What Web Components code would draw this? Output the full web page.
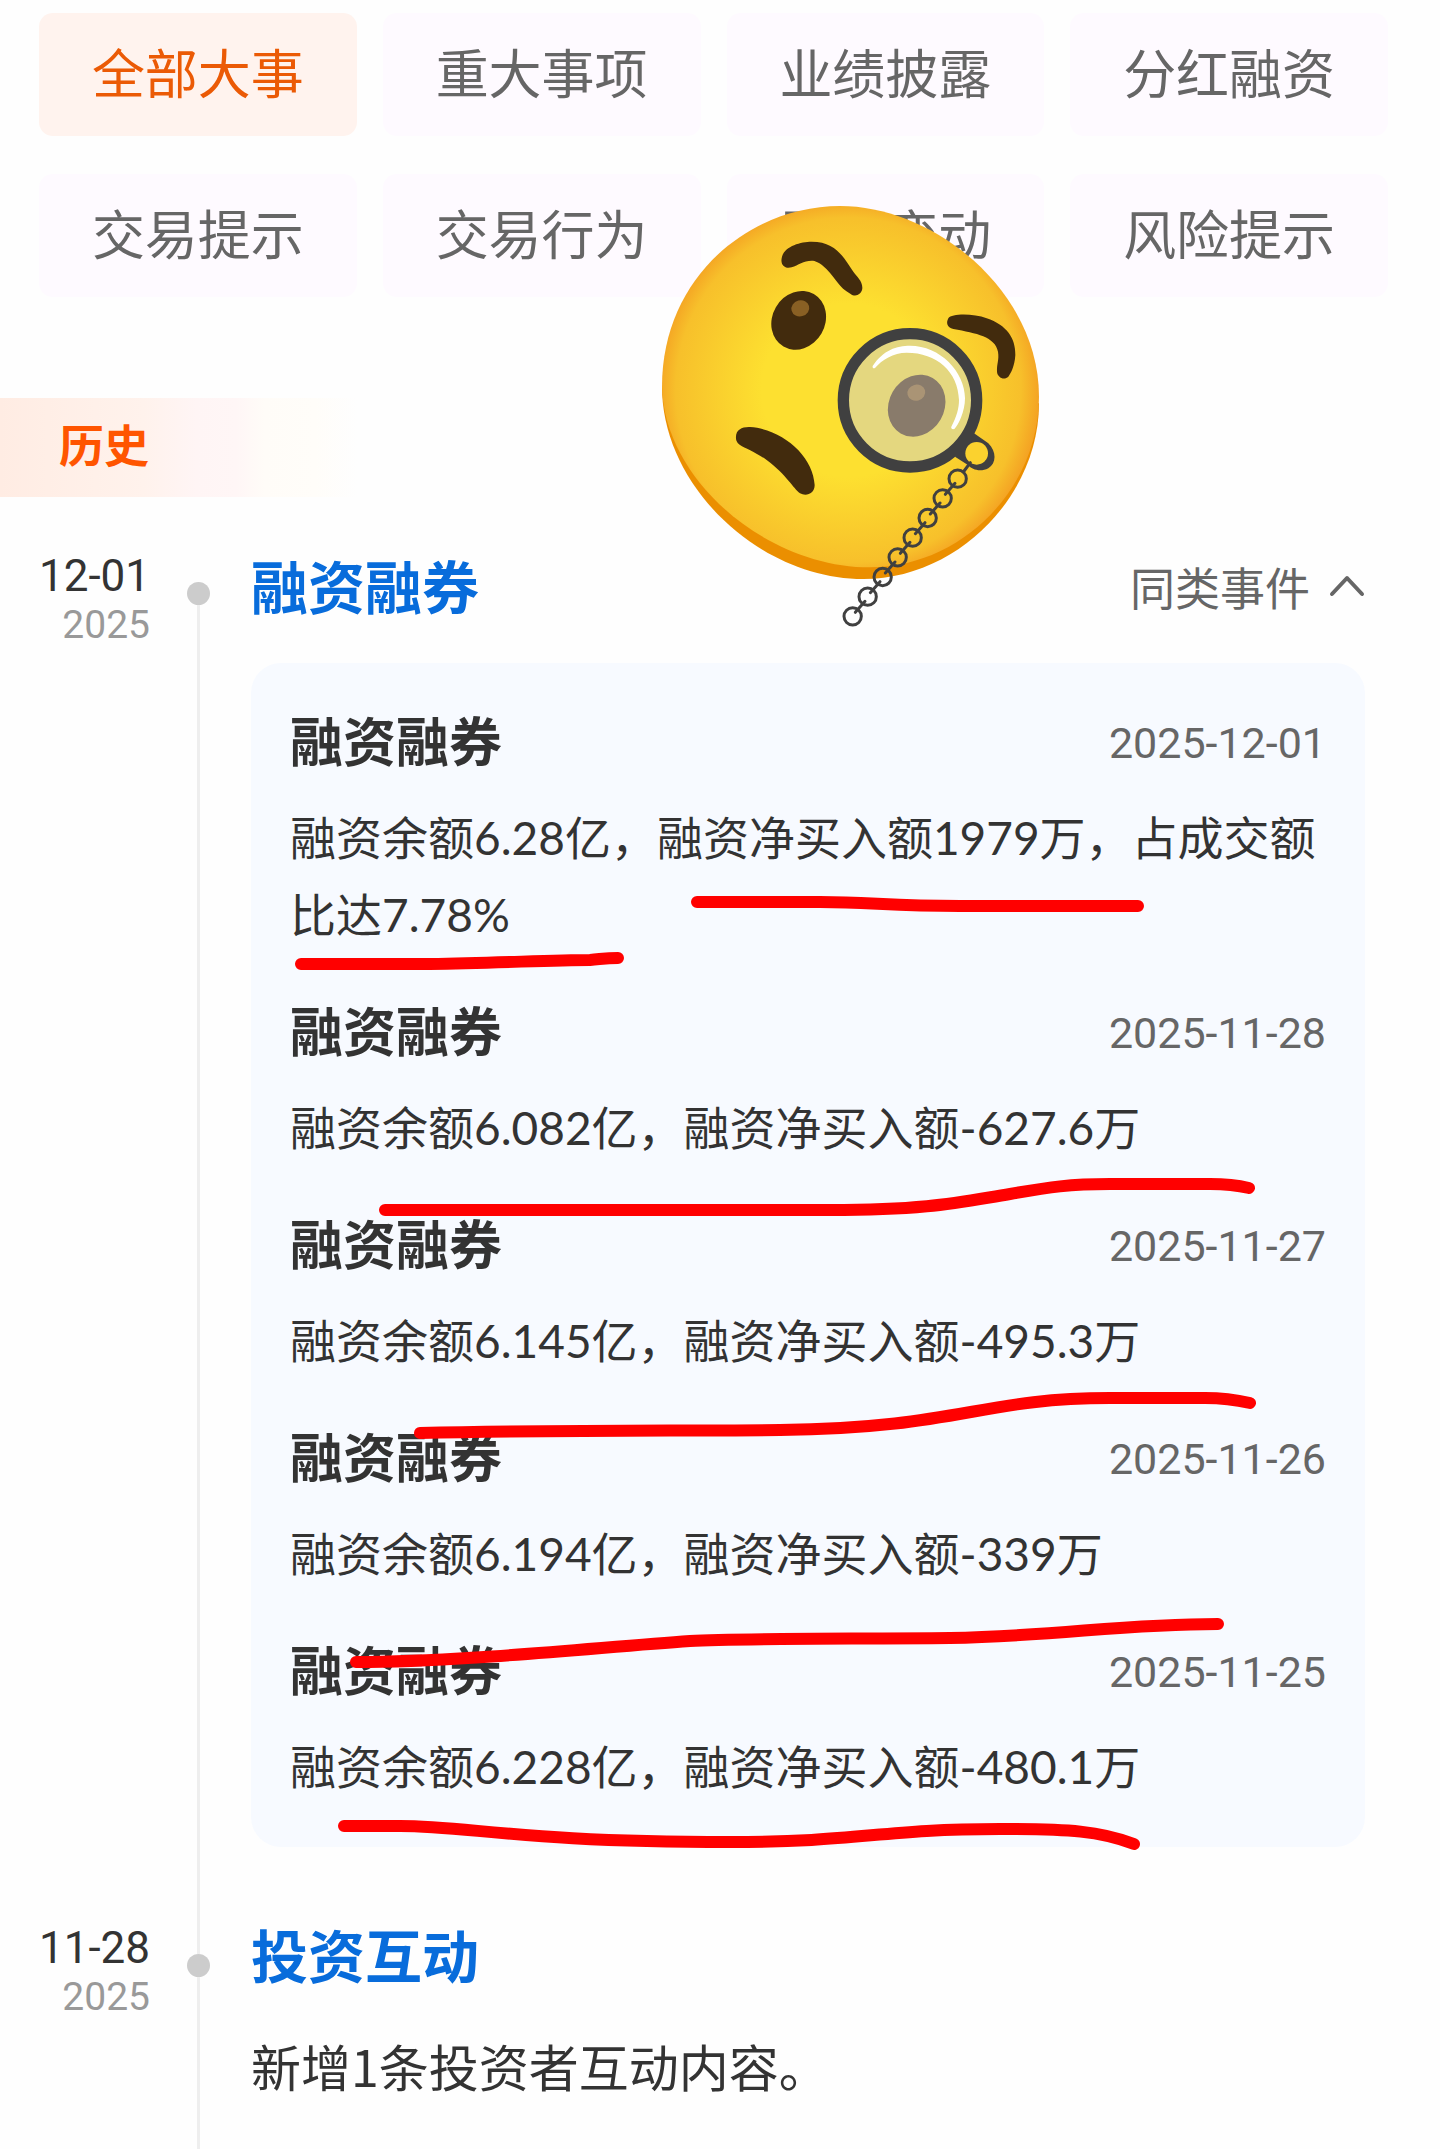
<!DOCTYPE html>
<html lang="zh-CN">
<head>
<meta charset="UTF-8">
<meta name="viewport" content="width=device-width, initial-scale=1">
<title>公司大事</title>
<style>
  body {
    margin: 0;
    background: #fefefe;
    color: #333;
    font-family: "Noto Sans CJK SC", sans-serif;
  }
</style>
</head>
<body>
<event-page>
  <filter-bar>
    <filter-chip active>全部大事</filter-chip>
    <filter-chip>重大事项</filter-chip>
    <filter-chip>业绩披露</filter-chip>
    <filter-chip>分红融资</filter-chip>
    <filter-chip>交易提示</filter-chip>
    <filter-chip>交易行为</filter-chip>
    <filter-chip>股东变动</filter-chip>
    <filter-chip>风险提示</filter-chip>
  </filter-bar>
  <section-banner>历史</section-banner>
  <timeline-event day="12-01" year="2025" heading="融资融券" first>
    <similar-toggle slot="action">同类事件</similar-toggle>
    <record-card>
      <event-record heading="融资融券" date="2025-12-01">融资余额6.28亿，融资净买入额1979万，占成交额比达7.78%</event-record>
      <event-record heading="融资融券" date="2025-11-28">融资余额6.082亿，融资净买入额-627.6万</event-record>
      <event-record heading="融资融券" date="2025-11-27">融资余额6.145亿，融资净买入额-495.3万</event-record>
      <event-record heading="融资融券" date="2025-11-26">融资余额6.194亿，融资净买入额-339万</event-record>
      <event-record heading="融资融券" date="2025-11-25">融资余额6.228亿，融资净买入额-480.1万</event-record>
    </record-card>
  </timeline-event>
  <timeline-event day="11-28" year="2025" heading="投资互动" last>新增1条投资者互动内容。</timeline-event>
  <marker-lines slot="overlay"></marker-lines>
  <monocle-face slot="overlay"></monocle-face>
</event-page>

<script>
class EventPage extends HTMLElement {
  constructor() {
    super();
    this.attachShadow({ mode: 'open' });
    this.shadowRoot.innerHTML = `
      <style>
        :host {
          display: block;
          position: relative;
          overflow: hidden;
        }
        main {
          display: flex;
          flex-direction: column;
        }
      </style>
      <main><slot></slot></main>
      <slot name="overlay"></slot>
    `;
  }
}

class FilterBar extends HTMLElement {
  constructor() {
    super();
    this.attachShadow({ mode: 'open' });
    this.shadowRoot.innerHTML = `
      <style>
        :host { display: block; }
        nav {
          display: grid;
          grid-template-columns: repeat(4, 1fr);
          gap: 38px 26px;
          padding: 13px 52px 101px 39px;
        }
      </style>
      <nav aria-label="事件类型"><slot></slot></nav>
    `;
  }
}

class FilterChip extends HTMLElement {
  constructor() {
    super();
    this.attachShadow({ mode: 'open' });
    const active = this.hasAttribute('active');
    this.shadowRoot.innerHTML = `
      <style>
        :host { display: block; }
        button {
          display: block;
          width: 100%;
          height: 123px;
          padding: 0 0 8px;
          border: 0;
          border-radius: 14px;
          background: #fefaff;
          color: #666;
          font: inherit;
          font-size: 53px;
          line-height: 72px;
          white-space: nowrap;
          cursor: pointer;
        }
        :host([active]) button {
          background: #fff3ee;
          color: #eb5a05;
        }
      </style>
      <button type="button" aria-pressed="${active}"><slot></slot></button>
    `;
  }
}

class SectionBanner extends HTMLElement {
  constructor() {
    super();
    this.attachShadow({ mode: 'open' });
    this.shadowRoot.innerHTML = `
      <style>
        :host {
          display: block;
          margin-bottom: 48px;
        }
        h2 {
          box-sizing: border-box;
          width: 358px;
          margin: 0;
          padding: 12px 59px 19px;
          background: linear-gradient(to right, #ffece3, #fff2ec 40%, #fff5f5 55%, #fff6f6 66%, #fffcf8 74%, #fffdf9 88%, #fefefe);
          color: #ff5500;
          font-size: 45px;
          font-weight: 700;
          line-height: 68px;
        }
      </style>
      <h2><slot></slot></h2>
    `;
  }
}

class TimelineEvent extends HTMLElement {
  constructor() {
    super();
    this.attachShadow({ mode: 'open' });
    this.shadowRoot.innerHTML = `
      <style>
        :host {
          display: grid;
          grid-template-columns: 150px 97px 1fr;
          padding-right: 75px;
        }
        time {
          display: flex;
          flex-direction: column;
          align-items: flex-end;
          padding-top: 5px;
          font-family: Roboto, sans-serif;
        }
        .day {
          font-size: 44px;
          line-height: 52px;
        }
        .year {
          color: #999;
          font-size: 39px;
          line-height: 46px;
        }
        .track {
          display: flex;
          flex-direction: column;
          align-items: center;
        }
        .stem {
          width: 3px;
          height: 37px;
          background: #eee;
        }
        :host([first]) .stem.top { background: none; }
        .stem.rest { flex: 1; }
        .dot {
          width: 23px;
          height: 23px;
          border-radius: 50%;
          background: #ccc;
        }
        .content { padding: 0 0 70px 4px; }
        :host([last]) .content { padding-bottom: 50px; }
        header {
          display: flex;
          align-items: center;
          justify-content: space-between;
          margin-bottom: 40px;
        }
        h3 {
          margin: 0;
          color: #086cdb;
          font-size: 57px;
          font-weight: 700;
          line-height: 72px;
        }
        .body {
          font-size: 50px;
          line-height: 72px;
        }
      </style>
      <time datetime="${this.getAttribute('year')}-${this.getAttribute('day')}">
        <span class="day">${this.getAttribute('day')}</span>
        <span class="year">${this.getAttribute('year')}</span>
      </time>
      <div class="track">
        <div class="stem top"></div>
        <div class="dot"></div>
        <div class="stem rest"></div>
      </div>
      <div class="content">
        <header>
          <h3>${this.getAttribute('heading')}</h3>
          <slot name="action"></slot>
        </header>
        <div class="body"><slot></slot></div>
      </div>
    `;
  }
}

class SimilarToggle extends HTMLElement {
  constructor() {
    super();
    this.attachShadow({ mode: 'open' });
    this.shadowRoot.innerHTML = `
      <style>
        :host { display: block; }
        button {
          display: flex;
          align-items: center;
          gap: 19px;
          box-sizing: border-box;
          height: 78px;
          padding: 4px 0 0;
          border: 0;
          background: none;
          color: #666;
          font: inherit;
          font-size: 45px;
          cursor: pointer;
        }
        svg { display: block; }
      </style>
      <button type="button" aria-expanded="true">
        <slot></slot>
        <svg width="36" height="24" viewBox="0 0 36 24" fill="none" stroke="#666" stroke-width="4" stroke-linecap="round" stroke-linejoin="round" aria-hidden="true">
          <path d="M3 20 18 4l15 16"/>
        </svg>
      </button>
    `;
  }
}

class RecordCard extends HTMLElement {
  constructor() {
    super();
    this.attachShadow({ mode: 'open' });
    this.shadowRoot.innerHTML = `
      <style>
        :host {
          display: flex;
          flex-direction: column;
          gap: 38px;
          padding: 38px 39px 42px;
          border-radius: 30px;
          background: #f7faff;
        }
      </style>
      <slot></slot>
    `;
  }
}

class EventRecord extends HTMLElement {
  constructor() {
    super();
    this.attachShadow({ mode: 'open' });
    this.shadowRoot.innerHTML = `
      <style>
        :host { display: block; }
        header {
          display: flex;
          align-items: center;
          justify-content: space-between;
          margin-bottom: 22px;
        }
        h4 {
          margin: 0;
          font-size: 53px;
          font-weight: 700;
          line-height: 76px;
        }
        time {
          padding-top: 8px;
          color: #666;
          font-family: Roboto, sans-serif;
          font-size: 43px;
          line-height: 60px;
        }
        p {
          margin: 0;
          font-family: Lato, "Noto Sans CJK SC", sans-serif;
          font-size: 46px;
          line-height: 77px;
        }
      </style>
      <header>
        <h4>${this.getAttribute('heading')}</h4>
        <time>${this.getAttribute('date')}</time>
      </header>
      <p><slot></slot></p>
    `;
  }
}

// Freehand underlines drawn over the records
class MarkerLines extends HTMLElement {
  constructor() {
    super();
    this.attachShadow({ mode: 'open' });
    this.shadowRoot.innerHTML = `
      <style>
        :host {
          position: absolute;
          top: 880px;
          left: 280px;
          pointer-events: none;
        }
        svg { display: block; }
      </style>
      <svg width="1000" height="980" viewBox="280 880 1000 980" fill="none" stroke="#f00" stroke-width="12" stroke-linecap="round" stroke-linejoin="round" aria-hidden="true">
        <path d="M697 902H820C870 902 890 906 960 906H1138"/>
        <path d="M301 964H430C500 963 550 960 590 960 602 959 606 958 618 958"/>
        <path d="M385 1210H830C930 1210 960 1202 1010 1194 1050 1187 1070 1184 1110 1184H1210Q1232 1184 1249 1188"/>
        <path d="M420 1433C560 1430 680 1431 780 1430 960 1428 980 1398 1110 1398H1205Q1228 1398 1250 1403"/>
        <path d="M356 1662C460 1662 590 1648 690 1641 740 1638 850 1639 950 1638 1060 1636 1120 1624 1218 1624"/>
        <path d="M344 1826H400C470 1826 520 1842 730 1842 860 1842 880 1829 1000 1829 1070 1829 1100 1831 1134 1844"/>
      </svg>
    `;
  }
}

class MonocleFace extends HTMLElement {
  constructor() {
    super();
    this.attachShadow({ mode: 'open' });
    let chain = '<path d="M991 818 970 846"/>';
    for (let i = 0; i < 8; i++) {
      const x = 953 - i * 45;
      const y = 866 + i * 59;
      chain += `<circle cx="${x}" cy="${y}" r="26"/>`;
      if (i < 7) chain += `<path d="M${x - 8} ${y + 14} ${x - 37} ${y + 47}"/>`;
    }
    this.shadowRoot.innerHTML = `
      <style>
        :host {
          position: absolute;
          top: 190px;
          left: 640px;
          pointer-events: none;
        }
        svg { display: block; }
      </style>
      <svg width="420" height="450" viewBox="0 0 1260 1350" role="img" aria-label="戴单片眼镜的表情">
        <defs>
          <radialGradient id="skin" gradientUnits="userSpaceOnUse" cx="625" cy="600" r="575">
            <stop offset=".45" stop-color="#fde030"/>
            <stop offset=".9" stop-color="#f7c02b"/>
            <stop offset="1" stop-color="#f4a223"/>
          </radialGradient>
        </defs>
        <path fill="#eb8f00" d="M66 590C66 890 360 1167 670 1167 950 1167 1197 920 1197 640Z"/>
        <path fill="url(#skin)" d="M66 590C66 260 330 48 600 48 880 48 1197 300 1197 620 1197 900 960 1132 690 1132 380 1132 72 870 66 590Z"/>
        <g fill="#422b0d">
          <path d="M425 205C430 170 480 155 515 155 590 155 612 205 640 245 650 260 668 272 667 295 665 315 645 322 632 312 595 292 590 268 560 238 540 217 525 212 515 212 490 212 475 225 455 232 435 238 421 225 425 205Z"/>
          <ellipse cx="476" cy="391" rx="79" ry="91" transform="rotate(30 476 391)"/>
          <path d="M925 385C935 370 1000 370 1040 385 1100 405 1127 445 1126 495 1124 530 1112 550 1105 560 1092 572 1072 562 1071 545 1070 520 1078 510 1074 485 1065 440 1010 430 940 417 920 412 918 398 925 385Z"/>
          <path d="M288 745C286 720 305 710 330 711 430 718 520 800 524 885 524 912 498 920 480 910 460 895 440 855 380 810 350 788 315 775 300 765 290 758 288 750 288 745Z"/>
        </g>
        <ellipse cx="481" cy="355" rx="27" ry="24" fill="#896024" transform="rotate(-15 481 355)"/>
        <path fill="#404040" d="M1000 728 1045 760C1070 785 1070 820 1045 835 1020 848 995 838 985 826L945 800Z"/>
        <circle cx="1010" cy="790" r="34" fill="#fbd22e"/>
        <circle cx="810" cy="631" r="200" fill="#e4d77f" stroke="#404040" stroke-width="34"/>
        <ellipse cx="830" cy="647" rx="83" ry="96" fill="#897b6b" transform="rotate(30 830 647)"/>
        <ellipse cx="829" cy="608" rx="27" ry="24" fill="#aa9475" transform="rotate(-15 829 608)"/>
        <path fill="#fff" d="M698 528C730 480 770 467 810 467 900 467 975 545 975 625 975 665 955 705 944 716 938 720 932 715 934 710 950 680 957 655 957 630 955 545 890 488 800 488 760 488 725 510 705 534 700 537 697 533 698 528Z"/>
        <g fill="none" stroke="#404040" stroke-width="9" stroke-linecap="round">${chain}</g>
      </svg>
    `;
  }
}

customElements.define('event-page', EventPage);
customElements.define('filter-bar', FilterBar);
customElements.define('filter-chip', FilterChip);
customElements.define('section-banner', SectionBanner);
customElements.define('timeline-event', TimelineEvent);
customElements.define('similar-toggle', SimilarToggle);
customElements.define('record-card', RecordCard);
customElements.define('event-record', EventRecord);
customElements.define('marker-lines', MarkerLines);
customElements.define('monocle-face', MonocleFace);
</script>
</body>
</html>
